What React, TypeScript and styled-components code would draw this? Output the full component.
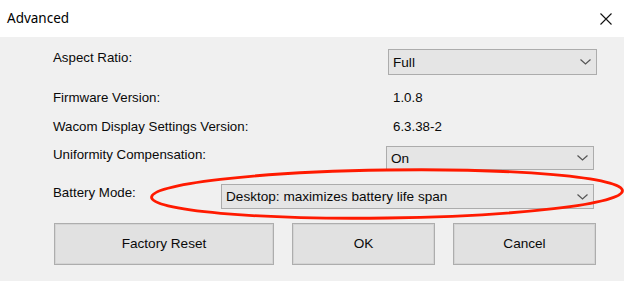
import styled, { createGlobalStyle } from "styled-components";

const GlobalStyle = createGlobalStyle`
  html, body {
    margin: 0;
    padding: 0;
    background: #f0f0f0;
  }
`;

const Window = styled.div`
  position: relative;
  width: 624px;
  height: 281px;
  display: flex;
  flex-direction: column;
  background: #f0f0f0;
  font-family: "Liberation Sans", Arial, sans-serif;
  font-size: 13.3px;
  color: #0a0a0a;
  overflow: hidden;
`;

const TitleBar = styled.div`
  height: 37px;
  flex: none;
  display: flex;
  align-items: center;
  justify-content: space-between;
  background: #fff;
  padding: 0 12px 0 7px;
`;

const Title = styled.span`
  font-family: "Noto Sans", "Liberation Sans", sans-serif;
  font-size: 13.5px;
  color: #000;
  margin-top: -1px;
`;

const Close = styled.svg`
  width: 12px;
  height: 12px;
`;

const Body = styled.div`
  display: flex;
  flex-direction: column;
  padding: 12px 0 0 53px;
`;

const Row = styled.div<{ $gap?: number }>`
  display: flex;
  align-items: flex-start;
  margin-top: ${(p) => p.$gap ?? 0}px;
`;

const Label = styled.div<{ $width: number }>`
  width: ${(p) => p.$width}px;
  flex: none;
  line-height: 16px;
  padding-top: 1px;
`;

const Value = styled.div`
  line-height: 16px;
  padding-top: 1px;
`;

const Select = styled.div<{ $width: number; $height: number }>`
  width: ${(p) => p.$width}px;
  height: ${(p) => p.$height}px;
  box-sizing: border-box;
  display: flex;
  align-items: center;
  justify-content: space-between;
  padding: 0 5px 0 4px;
  background: #e5e5e5;
  border: 1px solid #acacac;
  font-size: 13.6px;
`;

const Chevron = styled.svg`
  width: 11px;
  height: 6px;
`;

const Buttons = styled.div`
  display: flex;
  gap: 18px;
  margin-top: 14px;
  margin-left: 1px;
`;

const Button = styled.button<{ $width: number }>`
  width: ${(p) => p.$width}px;
  height: 42px;
  box-sizing: border-box;
  background: #e1e1e1;
  border: 1px solid #adadad;
  box-shadow: inset 0 0 0 1px #d4d4d4;
  font-family: "Liberation Sans", Arial, sans-serif;
  font-size: 13.6px;
  color: #0a0a0a;
  padding: 0 0 1px;
`;

const Annotation = styled.svg`
  position: absolute;
  left: 0;
  top: 0;
  width: 624px;
  height: 281px;
  pointer-events: none;
`;

function Dropdown({ value, width, height }: { value: string; width: number; height: number }) {
  return (
    <Select $width={width} $height={height}>
      <span>{value}</span>
      <Chevron viewBox="0 0 11 6">
        <polyline points="0.5,0.5 5.5,5 10.5,0.5" fill="none" stroke="#555" strokeWidth="1.2" />
      </Chevron>
    </Select>
  );
}

export default function App() {
  return (
    <Window>
      <GlobalStyle />
      <TitleBar>
        <Title>Advanced</Title>
        <Close viewBox="0 0 12 12">
          <path d="M0.5 0.5 L11.5 11.5 M11.5 0.5 L0.5 11.5" stroke="#111" strokeWidth="1.1" />
        </Close>
      </TitleBar>
      <Body>
        <Row>
          <Label $width={335}>Aspect Ratio:</Label>
          <Dropdown value="Full" width={209} height={26} />
        </Row>
        <Row $gap={14}>
          <Label $width={340}>Firmware Version:</Label>
          <Value>1.0.8</Value>
        </Row>
        <Row $gap={12}>
          <Label $width={340}>Wacom Display Settings Version:</Label>
          <Value>6.3.38-2</Value>
        </Row>
        <Row $gap={11}>
          <Label $width={333}>Uniformity Compensation:</Label>
          <Dropdown value="On" width={208} height={24} />
        </Row>
        <Row $gap={14}>
          <Label $width={168}>Battery Mode:</Label>
          <Dropdown value="Desktop: maximizes battery life span" width={373} height={25} />
        </Row>
        <Buttons>
          <Button $width={220}>Factory Reset</Button>
          <Button $width={143}>OK</Button>
          <Button $width={143}>Cancel</Button>
        </Buttons>
      </Body>
      <Annotation viewBox="0 0 624 281">
        <ellipse
          cx="387"
          cy="194"
          rx="235.5"
          ry="24"
          transform="rotate(-0.8 387 194)"
          fill="none"
          stroke="#ff1a00"
          strokeWidth="2.8"
        />
      </Annotation>
    </Window>
  );
}
